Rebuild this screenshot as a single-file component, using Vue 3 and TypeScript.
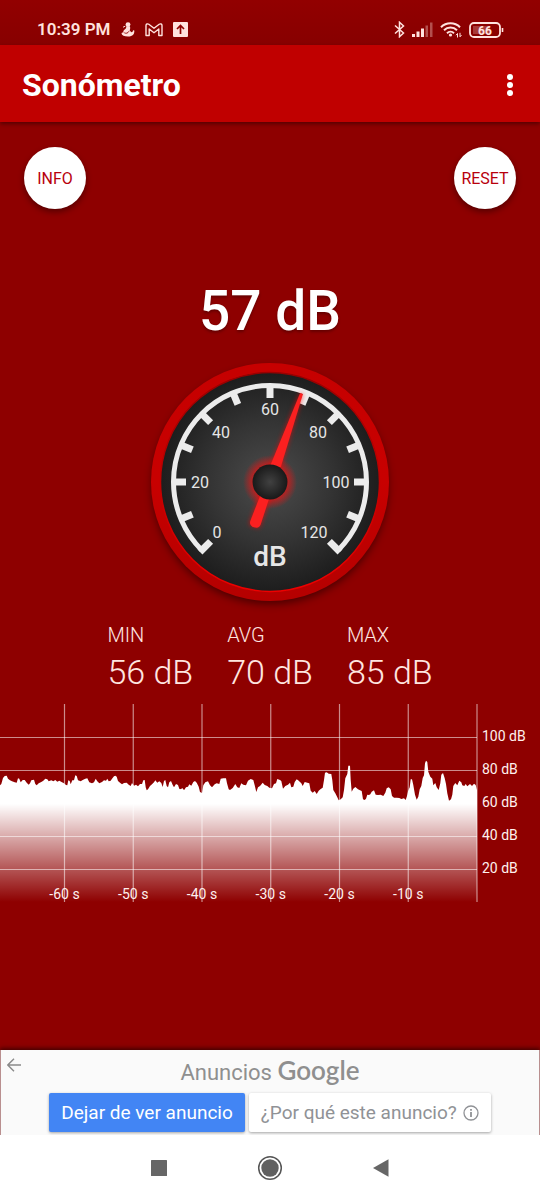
<script setup lang="ts">
interface Stat {
  label: string
  value: string
}

const level = '57 dB'

const stats: Stat[] = [
  { label: 'MIN', value: '56 dB' },
  { label: 'AVG', value: '70 dB' },
  { label: 'MAX', value: '85 dB' },
]

// Dial: 0 dB sits at 135 degrees from the top on the left, 120 dB on the right.
const tickAngles = Array.from({ length: 11 }, (_, i) => -112.5 + i * 22.5)
const dialLabels = [
  { text: '0', x: -53, y: 56 },
  { text: '20', x: -70, y: 6 },
  { text: '40', x: -49, y: -44 },
  { text: '60', x: 0, y: -67 },
  { text: '80', x: 48, y: -44 },
  { text: '100', x: 66, y: 6 },
  { text: '120', x: 44, y: 56 },
]

const timeLines = [
  { text: '-60 s', x: 64.5 },
  { text: '-50 s', x: 133.25 },
  { text: '-40 s', x: 202 },
  { text: '-30 s', x: 270.75 },
  { text: '-20 s', x: 339.5 },
  { text: '-10 s', x: 408.25 },
]
const levelLines = [
  { text: '100 dB', y: 33 },
  { text: '80 dB', y: 66 },
  { text: '60 dB', y: 99 },
  { text: '40 dB', y: 132 },
  { text: '20 dB', y: 165 },
]

// Recorded trace: x and depth pairs, three steps per chart unit.
const trace: number[] = [
  0, 256, 4, 252, 9, 234, 14, 228, 20, 227, 24, 236, 30, 241, 36, 244, 44, 247, 50, 248, 54, 235, 58, 236,
  62, 247, 68, 240, 74, 240, 80, 248, 86, 254, 90, 250, 94, 241, 102, 239, 106, 252, 110, 256, 116, 250,
  124, 246, 130, 242, 136, 236, 142, 238, 146, 244, 154, 241, 160, 244, 166, 240, 172, 245, 178, 242,
  186, 247, 192, 250, 198, 255, 202, 256, 205, 241, 209, 243, 212, 253, 217, 241, 222, 241, 226, 226,
  230, 228, 234, 241, 242, 244, 248, 240, 256, 236, 262, 235, 268, 247, 276, 250, 282, 247, 287, 236,
  292, 244, 298, 250, 306, 246, 312, 241, 318, 242, 322, 236, 326, 244, 332, 242, 336, 236, 342, 229,
  346, 227, 350, 230, 354, 243, 360, 248, 366, 253, 372, 249, 380, 248, 386, 254, 392, 258, 396, 249,
  402, 257, 408, 254, 414, 259, 420, 252, 426, 252, 430, 241, 434, 240, 437, 262, 440, 271, 444, 268,
  450, 258, 456, 253, 462, 247, 466, 241, 472, 248, 478, 244, 484, 249, 488, 261, 492, 243, 496, 240,
  500, 258, 504, 262, 508, 247, 513, 243, 518, 255, 522, 262, 528, 252, 534, 255, 538, 266,
  540, 268, 548, 265, 552, 271, 558, 262, 564, 260, 568, 253, 574, 257, 580, 246, 585, 243, 590, 248,
  596, 260, 600, 276, 606, 279, 610, 256, 616, 247, 624, 244, 630, 256, 636, 262, 644, 253, 650, 250,
  658, 252, 662, 236, 670, 235, 678, 235, 681, 250, 686, 268, 690, 270, 698, 264, 706, 252, 712, 262,
  718, 264, 724, 250, 730, 254, 738, 256, 744, 242, 752, 237, 760, 240, 764, 256, 769, 276, 774, 262,
  780, 258, 788, 248, 794, 255, 802, 258, 808, 263, 816, 265, 822, 252, 828, 250, 832, 237, 840, 240,
  844, 243, 849, 266, 856, 258, 864, 254, 870, 248, 874, 262, 880, 260, 884, 246, 890, 238, 896, 242,
  904, 250, 908, 258, 914, 246, 922, 248, 928, 250, 932, 272, 938, 278, 944, 273, 950, 282, 956, 272,
  962, 267, 968, 263, 972, 240, 975, 218, 980, 217, 986, 221, 994, 222, 997, 240, 1000, 270, 1006, 280,
  1012, 292, 1016, 301, 1022, 298, 1028, 292, 1032, 270, 1036, 235, 1042, 222, 1045, 197, 1050, 197,
  1052, 240, 1055, 275, 1060, 266, 1066, 261, 1074, 268, 1080, 271, 1085, 273, 1089, 298, 1094, 300,
  1098, 296, 1102, 284, 1107, 285, 1111, 283, 1115, 275, 1122, 271, 1127, 284, 1134, 285, 1142, 284,
  1150, 288, 1156, 278, 1160, 265, 1166, 262, 1172, 268, 1176, 288, 1182, 293, 1190, 293, 1198, 294,
  1204, 297, 1212, 295, 1217, 300, 1221, 288, 1224, 274, 1229, 262, 1232, 238, 1236, 238, 1240, 255,
  1245, 284, 1250, 299, 1255, 290, 1259, 268, 1264, 258, 1268, 234, 1272, 226, 1275, 190, 1278, 182,
  1282, 186, 1285, 215, 1291, 230, 1297, 236, 1300, 256, 1306, 249, 1310, 262, 1316, 270, 1321, 250,
  1324, 224, 1329, 219, 1334, 235, 1338, 252, 1342, 280, 1347, 302, 1353, 298, 1357, 284, 1360, 258,
  1366, 249, 1372, 256, 1378, 242, 1384, 247, 1387, 256, 1393, 258, 1397, 252, 1402, 259, 1410, 252,
  1416, 258, 1422, 251, 1427, 255, 1431, 270,
]

function areaPath(points: number[]): string {
  let path = 'M0 198'
  for (let i = 0; i < points.length; i += 2) {
    path += `L${(points[i] / 3).toFixed(1)} ${(points[i + 1] / 3 - 4).toFixed(1)}`
  }
  return path + 'V198Z'
}

const area = areaPath(trace)
</script>

<template>
  <div class="screen">
    <div class="status">
      <div class="status-group left">
        <time>10:39 PM</time>
        <svg width="14" height="15" viewBox="0 0 14 15" fill="currentColor" aria-hidden="true">
          <circle cx="7" cy="2.600" r="2.400" />
          <path d="M5.300 4.300h3.600c.5 1.300.4 2.900-.3 4.300l1.800 1.600c.9 0 1.600-.6 1.600-1.900l1.300.2c.3 3.400-1.400 6-6.300 6-3.800 0-6.200-1.100-6.500-3 .1-.8.900-1.100 1.900-.8-.4-1.500.5-2.900 1.900-3.700.8-.6 1.100-1.500 1-2.700z" />
          <path d="M3.300 10.800c1.800.9 3.600.5 4.700-1.600" fill="none" stroke="#8e0000" stroke-width="0.900" />
          <path d="M2 5.200 4.300 4.200" stroke="currentColor" stroke-width="1" />
        </svg>
        <svg width="18" height="14" viewBox="0 0 18 14" aria-hidden="true">
          <path
            d="M1 12.500V2.600C1 1 2.600.4 3.800 1.300L9 5.300l5.200-4C15.400.4 17 1 17 2.600v9.900h-3.200V6L9 9.700 4.200 6v6.500z"
            fill="none"
            stroke="currentColor"
            stroke-width="1.400"
            stroke-linejoin="round"
          />
        </svg>
        <svg width="15" height="15" viewBox="0 0 15 15" aria-hidden="true">
          <rect width="15" height="15" rx="1" fill="currentColor" />
          <path d="M7.500 12V3.500M4 7l3.500-3.500L11 7" fill="none" stroke="#8e0000" stroke-width="1.700" />
        </svg>
      </div>
      <div class="status-group right">
        <svg width="11" height="17" viewBox="0 0 11 17" aria-hidden="true">
          <path d="M1 4.500 9.500 12 5.500 15.700V1.300L9.500 5 1 12.500" fill="none" stroke="currentColor" stroke-width="1.500" />
        </svg>
        <svg width="21" height="15" viewBox="0 0 21 15" fill="currentColor" aria-hidden="true">
          <rect x="0" y="12" width="3" height="3" />
          <rect x="4.500" y="9.500" width="3" height="5.500" />
          <rect x="9" y="6.500" width="3" height="8.500" />
          <rect x="13.500" y="3.500" width="2.500" height="11.500" opacity="0.350" />
          <rect x="18" y="0.500" width="2.500" height="14.500" opacity="0.350" />
        </svg>
        <svg width="22" height="17" viewBox="0 0 22 17" aria-hidden="true">
          <g fill="none" stroke="currentColor" stroke-width="2">
            <path d="M1 6.200a13.500 13.500 0 0 1 19 0" />
            <path d="M4 9.200a9.300 9.300 0 0 1 13 0" />
            <path d="M7 12.200a5 5 0 0 1 7 0" />
          </g>
          <circle cx="10.500" cy="14" r="1.600" fill="currentColor" />
          <path d="M17.500 16.500v-4l-1.500 1.700M20 11.800v4l1.500-1.700" fill="none" stroke="currentColor" stroke-width="1" />
        </svg>
        <svg class="battery" width="35" height="16" viewBox="0 0 35 16" role="img" aria-label="66">
          <rect x="1" y="1" width="30" height="14" rx="4" fill="none" stroke="currentColor" stroke-width="1.800" />
          <rect x="4" y="4" width="17" height="8" fill="currentColor" opacity="0.250" />
          <path d="M33.500 6v4" stroke="currentColor" stroke-width="1.600" />
          <text x="16" y="12.500" text-anchor="middle">66</text>
        </svg>
      </div>
    </div>

    <header class="appbar">
      <h1>Sonómetro</h1>
      <button class="menu" type="button" aria-label="Menú">
        <svg width="8" height="24" viewBox="0 0 8 24" fill="#fff" aria-hidden="true">
          <circle cx="4" cy="4" r="3" />
          <circle cx="4" cy="12" r="3" />
          <circle cx="4" cy="20" r="3" />
        </svg>
      </button>
    </header>

    <main>
      <div class="actions">
        <button class="round" type="button">INFO</button>
        <button class="round" type="button">RESET</button>
      </div>

      <p class="level">{{ level }}</p>

      <svg class="gauge" viewBox="-135 -133 270 266" role="img" aria-label="dB">
        <defs>
          <linearGradient id="rim" x1="0" y1="0" x2="0" y2="1">
            <stop offset="0" stop-color="#c60000" />
            <stop offset="0.500" stop-color="#c80000" />
            <stop offset="1" stop-color="#b40000" />
          </linearGradient>
          <linearGradient id="lip" x1="0" y1="0" x2="0" y2="1">
            <stop offset="0" stop-color="#980000" />
            <stop offset="0.500" stop-color="#c00000" />
            <stop offset="1" stop-color="#ee0000" />
          </linearGradient>
          <radialGradient id="face">
            <stop offset="0" stop-color="#4c4c4c" />
            <stop offset="0.550" stop-color="#343434" />
            <stop offset="1" stop-color="#1d1d1d" />
          </radialGradient>
          <radialGradient id="hub">
            <stop offset="0" stop-color="#414141" />
            <stop offset="1" stop-color="#191919" />
          </radialGradient>
          <radialGradient id="glow">
            <stop offset="0.600" stop-color="#f01010" stop-opacity="0.750" />
            <stop offset="1" stop-color="#f01010" stop-opacity="0" />
          </radialGradient>
          <filter id="soft" x="-20%" y="-20%" width="140%" height="140%">
            <feGaussianBlur stdDeviation="4" />
          </filter>
          <filter id="halo" x="-100%" y="-20%" width="300%" height="140%">
            <feGaussianBlur stdDeviation="2" />
          </filter>
        </defs>
        <circle cy="4" r="118" fill="#000" opacity="0.500" filter="url(#soft)" />
        <circle r="119" fill="url(#rim)" />
        <circle r="109.500" fill="url(#face)" stroke="url(#lip)" stroke-width="1.500" />
        <g fill="none" stroke="#ececec">
          <path d="M-68.200 68.200A96.500 96.500 0 1 1 68.200 68.200" stroke-width="5" />
          <path d="M-70 70-59.400 59.400M70 70 59.400 59.400" stroke-width="7" />
          <path
            v-for="angle in tickAngles"
            :key="angle"
            d="M0-96V-84"
            stroke-width="7"
            :transform="`rotate(${angle})`"
          />
        </g>
        <g class="dial-text">
          <text v-for="mark in dialLabels" :key="mark.text" :x="mark.x" :y="mark.y">{{ mark.text }}</text>
          <text class="unit" x="0" y="84">dB</text>
        </g>
        <circle r="27" fill="url(#glow)" />
        <g transform="rotate(19.600)">
          <g fill="#f00" opacity="0.550" filter="url(#halo)">
            <path d="M-6-10-2-94H2L6-10z" />
            <rect x="-6" y="10" width="12" height="38" rx="4" />
          </g>
          <path d="M-5.500-10-1.500-94H1.500L5.500-10z" fill="#fb2020" />
          <path d="M-4.500 10-5.500 43Q-5.500 48 0 48T5.500 43L4.500 10z" fill="#fb2020" />
        </g>
        <circle r="17.500" fill="url(#hub)" />
      </svg>

      <dl class="stats">
        <div v-for="stat in stats" :key="stat.label">
          <dt>{{ stat.label }}</dt>
          <dd>{{ stat.value }}</dd>
        </div>
      </dl>

      <svg class="chart" viewBox="0 0 540 198" role="img" aria-label="dB">
        <defs>
          <linearGradient id="fade" gradientUnits="userSpaceOnUse" x1="0" y1="100" x2="0" y2="198">
            <stop offset="0" stop-color="#fff" />
            <stop offset="1" stop-color="#fff" stop-opacity="0" />
          </linearGradient>
        </defs>
        <path :d="area" fill="url(#fade)" />
        <g stroke="#fff" stroke-opacity="0.550" stroke-width="1.200">
          <line v-for="line in levelLines" :key="line.text" x1="0" x2="477" :y1="line.y + 0.500" :y2="line.y + 0.500" />
          <line v-for="line in timeLines" :key="line.text" y1="0" y2="198" :x1="line.x" :x2="line.x" />
          <line x1="477" x2="477" y1="0" y2="198" />
        </g>
        <text v-for="line in levelLines" :key="line.text" x="482" :y="line.y + 4">{{ line.text }}</text>
        <text v-for="line in timeLines" :key="line.text" :x="line.x" y="195" text-anchor="middle">{{ line.text }}</text>
      </svg>
    </main>

    <section class="ad" aria-label="Anuncios Google">
      <button class="back" type="button" aria-label="Atrás">
        <svg width="14" height="14" viewBox="0 0 14 14" aria-hidden="true">
          <path d="M14 7H1M7 .8.800 7 7 13.200" fill="none" stroke="#8a8a8a" stroke-width="1.400" />
        </svg>
      </button>
      <p class="ad-title">Anuncios <span>Google</span></p>
      <div class="ad-actions">
        <button class="primary" type="button">Dejar de ver anuncio</button>
        <button class="plain" type="button">
          ¿Por qué este anuncio?
          <svg width="16" height="16" viewBox="0 0 16 16" aria-hidden="true">
            <circle cx="8" cy="8" r="7" fill="none" stroke="#909296" stroke-width="1.300" />
            <path d="M8 7v5M8 4v1.800" stroke="#909296" stroke-width="1.800" />
          </svg>
        </button>
      </div>
    </section>

    <nav class="system">
      <button type="button" aria-label="Recientes">
        <svg width="24" height="24" viewBox="0 0 24 24" aria-hidden="true"><rect x="4" y="4" width="16" height="16" rx="0.500" fill="#666" /></svg>
      </button>
      <button type="button" aria-label="Inicio">
        <svg width="26" height="26" viewBox="0 0 26 26" aria-hidden="true">
          <circle cx="13" cy="13" r="11.300" fill="none" stroke="#555" stroke-width="1.500" />
          <circle cx="13" cy="13" r="8.700" fill="#606060" />
        </svg>
      </button>
      <button type="button" aria-label="Volver">
        <svg width="24" height="24" viewBox="0 0 24 24" aria-hidden="true"><path d="M4 12 19.500 3.200V20.800z" fill="#666" /></svg>
      </button>
    </nav>
  </div>
</template>

<style>
body {
  background: #8e0000;
}
</style>

<style scoped>
.screen {
  display: flex;
  flex-direction: column;
  min-height: 100vh;
  background: #8e0000;
  color: #fff;
  font-family: Roboto, "Liberation Sans", sans-serif;
}

svg {
  display: block;
  flex: none;
}

h1,
p,
dl,
dd {
  margin: 0;
}

button {
  margin: 0;
  padding: 0;
  border: 0;
  background: none;
  font-family: inherit;
  cursor: pointer;
}

.status {
  display: flex;
  align-items: flex-end;
  justify-content: space-between;
  height: 45px;
  padding: 0 36px 5px 37px;
  box-sizing: border-box;
  background: linear-gradient(#920000, #870000);
  color: #ffe2de;
}

.status-group {
  display: flex;
  align-items: center;
  height: 21px;
}

.left {
  gap: 10px;
}

.right {
  gap: 7px;
}

time {
  font-size: 17px;
  font-weight: 600;
  line-height: 21px;
}

.battery text {
  fill: currentColor;
  font-size: 12px;
  font-weight: 700;
}

.appbar {
  display: flex;
  align-items: center;
  justify-content: space-between;
  height: 77px;
  padding: 2px 26px 0 22px;
  box-sizing: border-box;
  background: #c00000;
  box-shadow: 0 2px 4px rgba(0, 0, 0, 0.4);
}

h1 {
  font-size: 32px;
  font-weight: 700;
  line-height: 40px;
}

main {
  display: flex;
  flex-direction: column;
  align-items: center;
}

.actions {
  display: flex;
  justify-content: space-between;
  width: 100%;
  padding: 25px 24px 0;
  box-sizing: border-box;
}

.round {
  width: 62px;
  height: 62px;
  border-radius: 50%;
  background: #fff;
  color: #b8000c;
  font-size: 16px;
  box-shadow: 0 3px 6px rgba(0, 0, 0, 0.4);
}

.level {
  margin: 70px 0 6px;
  font-size: 55px;
  font-weight: 500;
  line-height: 64px;
  text-shadow: 0 2px 3px rgba(0, 0, 0, 0.3);
}

.gauge {
  width: 50%;
}

.dial-text text {
  fill: #e6e6e6;
  font-size: 16px;
  text-anchor: middle;
}

.dial-text .unit {
  font-size: 28px;
  font-weight: 500;
}

.stats {
  display: flex;
  gap: 34px;
  margin: 8px 0 11px;
  color: #ffe6e0;
  font-weight: 300;
}

dt {
  font-size: 20px;
  line-height: 24px;
}

dd {
  margin-top: 4px;
  font-size: 34px;
  line-height: 42px;
}

.chart {
  width: 100%;
}

.chart text {
  fill: #fff0ee;
  font-size: 14px;
}

.ad {
  position: relative;
  display: flex;
  flex-direction: column;
  align-items: center;
  margin-top: auto;
  height: 85px;
  box-sizing: border-box;
  padding-top: 4px;
  border: solid #b98f8f;
  border-width: 0 1px;
  background: #fafafa;
  box-shadow: 0 -2px 4px rgba(0, 0, 0, 0.5);
}

.back {
  position: absolute;
  top: 8px;
  left: 6px;
}

.ad-title {
  color: #8f8f8f;
  font-size: 22px;
  line-height: 32px;
}

.ad-title span {
  font-family: Lato, sans-serif;
  font-size: 26px;
  font-weight: 600;
}

.ad-actions {
  display: flex;
  gap: 4px;
  margin-top: 4px;
}

.ad-actions button {
  display: flex;
  align-items: center;
  gap: 6px;
  height: 39px;
  padding: 0 12px;
  border-radius: 2px;
  font-size: 19px;
  white-space: nowrap;
  box-shadow: 0 1px 3px rgba(0, 0, 0, 0.35);
}

.ad-actions .primary {
  background: #4285f4;
  color: #fff;
}

.ad-actions .plain {
  background: #fff;
  color: #909296;
}

.system {
  position: relative;
  display: flex;
  align-items: center;
  justify-content: center;
  gap: 86px;
  height: 65px;
  background: #fff;
}
</style>
